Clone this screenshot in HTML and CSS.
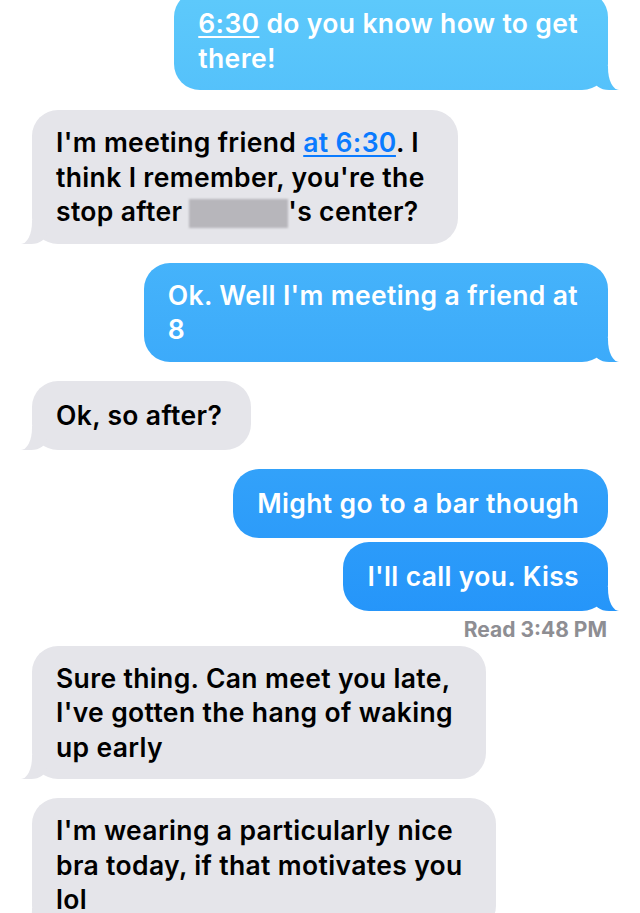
FILE: index.html
```html
<!DOCTYPE html>
<html lang="en">
<head>
    <meta charset="UTF-8">
    <meta name="viewport" content="width=device-width, initial-scale=1.0">
    <title>Messages</title>
    <link rel="stylesheet" href="styles.css">
</head>
<body>
    <div class="thread">
        <div class="msg sent tail"><span class="link">6:30</span> do you know how to get<br>there!</div>
        <div class="msg received tail">I'm meeting friend <span class="link">at 6:30</span>. I<br>think I remember, you're the<br>stop after <span class="redacted"></span>'s center?</div>
        <div class="msg sent tail">Ok. Well I'm meeting a friend at<br>8</div>
        <div class="msg received tail single">Ok, so after?</div>
        <div class="msg sent single">Might go to a bar though</div>
        <div class="msg sent tail single grouped">I'll call you. Kiss</div>
        <div class="receipt">Read 3:48 PM</div>
        <div class="msg received tail">Sure thing. Can meet you late,<br>I've gotten the hang of waking<br>up early</div>
        <div class="msg received tail">I'm wearing a particularly nice<br>bra today, if that motivates you<br>lol</div>
    </div>
</body>
</html>
```

FILE: styles.css
```css
body {
    margin: 0;
    background: #fff;
    font-family: Inter, "Liberation Sans", sans-serif;
    overflow: hidden;
}
.thread {
    display: flex;
    flex-direction: column;
    padding: 0 32px;
    margin-top: -9px;
}
.msg {
    position: relative;
    margin-top: 19px;
    padding: 15px 30px 15px 24px;
    border-radius: 26px;
    font-size: 26.5px;
    font-weight: 600;
    line-height: 34.5px;
    letter-spacing: 0.35px;
    white-space: nowrap;
}
.msg:first-child {
    margin-top: 0;
}
.msg.single {
    padding-top: 17px;
    padding-bottom: 17.5px;
    padding-right: 29px;
}
.msg.grouped {
    margin-top: 4px;
}
.sent {
    align-self: flex-end;
    color: #fff;
    /* gradient runs over the whole screen, like iOS 7 */
    background: linear-gradient(#5dc9fb, #0a7cf9) fixed;
}
.received {
    align-self: flex-start;
    color: #000;
    background: #e5e5ea;
    padding-right: 33px;
}
.received:nth-child(2) {
    margin-top: 20px;
}
.link {
    text-decoration: underline;
    text-decoration-thickness: 2px;
    text-underline-offset: 3px;
}
.received .link {
    color: #0a7bff;
}
.redacted {
    display: inline-block;
    width: 99px;
    height: 29px;
    vertical-align: -7px;
    background: #b7b6bb;
    filter: blur(1px);
}

/* tails */
.tail::before,
.tail::after {
    content: "";
    position: absolute;
    bottom: 0;
    height: 24px;
}
.sent.tail::before {
    right: -11px;
    width: 26px;
    background: linear-gradient(#5dc9fb, #0a7cf9) fixed;
    border-bottom-left-radius: 16px 12px;
}
.sent.tail::after {
    right: -40px;
    width: 40px;
    background: #fff;
    border-bottom-left-radius: 11px 22px;
}
.received.tail::before {
    left: -11px;
    width: 26px;
    background: #e5e5ea;
    border-bottom-right-radius: 16px 12px;
}
.received.tail::after {
    left: -40px;
    width: 40px;
    background: #fff;
    border-bottom-right-radius: 11px 22px;
}

.receipt {
    align-self: flex-end;
    margin: 7px 1px 0 0;
    font-size: 21px;
    font-weight: 700;
    line-height: 24px;
    color: #8e8e93;
}
.receipt + .msg {
    margin-top: 4px;
}
```
